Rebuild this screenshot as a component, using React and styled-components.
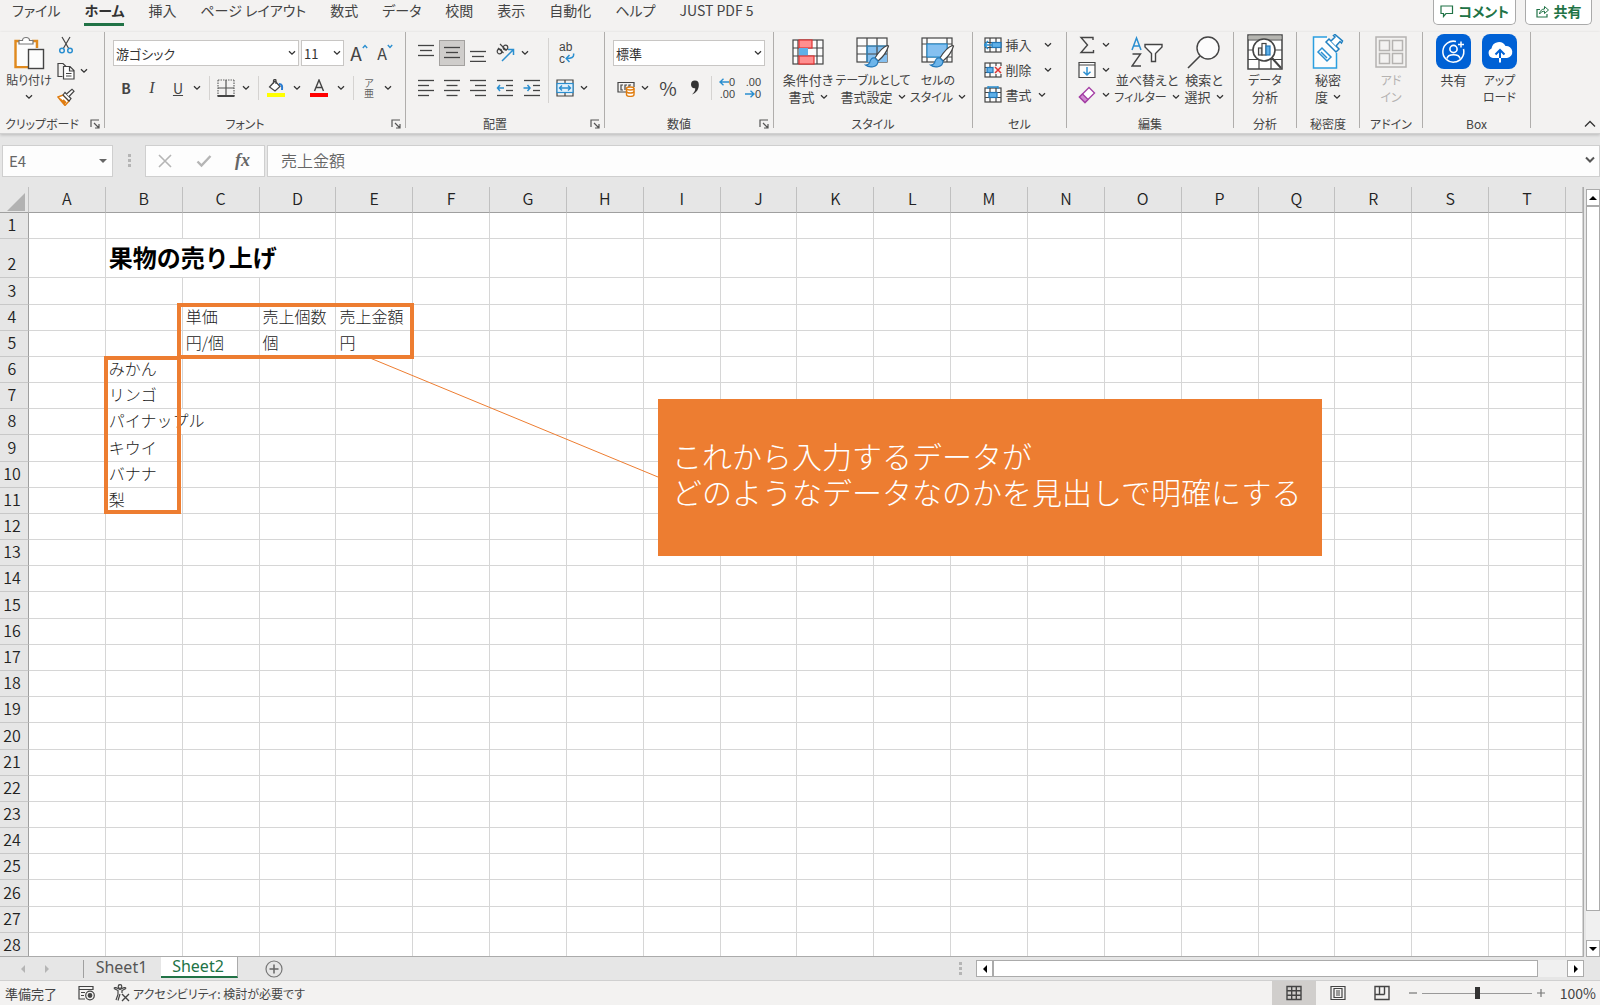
import React, { useState } from 'react'
import styled, { createGlobalStyle, css } from 'styled-components'

const TABS = ['ファイル', 'ホーム', '挿入', 'ページ レイアウト', '数式', 'データ', '校閲', '表示', '自動化', 'ヘルプ', 'JUST PDF 5']
const COLUMNS = 'ABCDEFGHIJKLMNOPQRST'.split('')
const ROW_COUNT = 28

const CELLS = {
  B2: { text: '果物の売り上げ', span: 3, title: true },
  C4: { text: '単価' },
  D4: { text: '売上個数' },
  E4: { text: '売上金額' },
  C5: { text: '円/個' },
  D5: { text: '個' },
  E5: { text: '円' },
  B6: { text: 'みかん' },
  B7: { text: 'リンゴ' },
  B8: { text: 'パイナップル', span: 2 },
  B9: { text: 'キウイ' },
  B10: { text: 'バナナ' },
  B11: { text: '梨' },
}

const hasKanji = (text) => /[一-龠]/.test(text)

/* ---------- icons ---------- */

const Svg = ({ w = 18, h = 18, children }) => (
  <svg width={w} height={h} viewBox={`0 0 ${w} ${h}`} fill="none" stroke="#444" strokeWidth="1.2" aria-hidden="true">
    {children}
  </svg>
)

const Chevron = () => (
  <Svg w={8} h={6}><path d="M1 1.2L4 4.2L7 1.2" stroke="#333" strokeWidth="1.3" /></Svg>
)

const PasteIcon = () => (
  <Svg w={32} h={34}>
    <path d="M7 5H2.5V31H15M19 5H24V12" stroke="#e08a1e" strokeWidth="2.4" />
    <path d="M4 7H22V13H15V30H4Z" fill="#fcfcfc" stroke="none" />
    <path d="M6 8V4.5H9.5C9.5 0.5 16.5 0.5 16.5 4.5H20V8Z" fill="#fff" stroke="#777" />
    <rect x="15.5" y="13.5" width="15" height="19" fill="#fcfcfc" stroke="#444" strokeWidth="1.4" />
  </Svg>
)

const CutIcon = () => (
  <Svg>
    <path d="M5 1L12 13M13 1L6 13" />
    <circle cx="5" cy="14.5" r="2.3" stroke="#2b8fd0" strokeWidth="1.5" />
    <circle cx="13" cy="14.5" r="2.3" stroke="#2b8fd0" strokeWidth="1.5" />
  </Svg>
)

const CopyIcon = () => (
  <Svg>
    <path d="M5.5 14.5H1V1.5H6L9 4.5" />
    <path d="M6.5 4.5H13L17 8.5V17H6.5ZM12.5 4.5V9H17" fill="#fff" />
    <path d="M9 11.5H14.5M9 14H14.5" />
  </Svg>
)

const PainterIcon = () => (
  <Svg>
    <path d="M1 9L6 7L12 13L8 17.5Z" fill="#fff" stroke="#e07d10" strokeWidth="1.4" />
    <path d="M3 11L8 16M6 12L9 15" stroke="#e07d10" strokeWidth="1.8" />
    <path d="M6 7L8 4.5L14 10.5L12 13Z" fill="#fff" />
    <path d="M9.5 6L15 1.2L17 3.2L12 8.5" fill="#fff" />
  </Svg>
)

const BordersIcon = () => (
  <Svg>
    <path d="M1 1H17M1 1V17M17 1V17" strokeDasharray="1.5 1" stroke="#666" />
    <path d="M9 1V17M1 9H17" stroke="#555" />
    <path d="M0.5 17H17.5" strokeWidth="2" />
  </Svg>
)

const FillIcon = () => (
  <Svg>
    <path d="M2.5 8L8 2L13 7.5L8 12Z" fill="#fff" />
    <path d="M6.5 4.5V1.5C7 0 9 0 9 1.5V5" />
    <path d="M12 5C15 5 15.5 7 15 11" stroke="#2b7cd0" strokeWidth="2" />
    <rect y="14" width="18" height="4" fill="#ff0" stroke="none" />
  </Svg>
)

const FontColorIcon = () => (
  <Svg>
    <path d="M4.5 12L9 1L13.5 12M6 8.5H12" strokeWidth="1.4" />
    <rect y="14" width="18" height="4" fill="#f00" stroke="none" />
  </Svg>
)

const Lines = ({ rows, children }) => (
  <Svg>
    {rows.map(([x, y, len]) => <path key={y} d={`M${x} ${y}H${x + len}`} strokeWidth="1.3" />)}
    {children}
  </Svg>
)
const TopAlignIcon = () => <Lines rows={[[1, 1.5, 16], [3, 6.5, 12], [1, 11.5, 16]]} />
const MiddleAlignIcon = () => <Lines rows={[[1, 3.5, 16], [3, 8.5, 12], [1, 13.5, 16]]} />
const BottomAlignIcon = () => <Lines rows={[[1, 7.5, 16], [3, 12.5, 12], [1, 17.4, 16]]} />
const LeftIcon = () => <Lines rows={[[1, 1.5, 16], [1, 6.5, 11], [1, 11.5, 16], [1, 16.5, 11]]} />
const CenterIcon = () => <Lines rows={[[1, 1.5, 16], [3.5, 6.5, 11], [1, 11.5, 16], [3.5, 16.5, 11]]} />
const RightIcon = () => <Lines rows={[[1, 1.5, 16], [6, 6.5, 11], [1, 11.5, 16], [6, 16.5, 11]]} />
const OutdentIcon = () => (
  <Lines rows={[[1, 1.5, 16], [10, 6.5, 7], [10, 11.5, 7], [1, 16.5, 16]]}>
    <path d="M8 9H1.5M4 6L1.5 9L4 12" stroke="#2b8fd0" strokeWidth="1.5" />
  </Lines>
)
const IndentIcon = () => (
  <Lines rows={[[1, 1.5, 16], [10, 6.5, 7], [10, 11.5, 7], [1, 16.5, 16]]}>
    <path d="M0.5 9H7M4.5 6L7 9L4.5 12" stroke="#2b8fd0" strokeWidth="1.5" />
  </Lines>
)

const OrientationIcon = () => (
  <Svg w={20} h={20}>
    <circle cx="4.5" cy="8.5" r="2.3" />
    <path d="M3 5L8.5 10M5 1L11.5 7.5" />
    <circle cx="10.5" cy="4.5" r="2.3" />
    <path d="M7 18L18 7M13 6.5H18.5V12" stroke="#2b8fd0" strokeWidth="1.5" />
  </Svg>
)

const MergeIcon = () => (
  <Svg>
    <path d="M1 1H17V17H1ZM9 1V4.5M9 13.5V17" />
    <rect x="1" y="4.5" width="16" height="9" fill="#e3f1fb" stroke="#2b8fd0" />
    <path d="M3.5 9H14.5M6 6.5L3.5 9L6 11.5M12 6.5L14.5 9L12 11.5" stroke="#2b8fd0" strokeWidth="1.4" />
  </Svg>
)

const CurrencyIcon = () => (
  <Svg>
    <path d="M9 13H1V3.5H17V8M6 6H4V11H6M10 6H8V11M14 6H12V8" />
    <path d="M9.5 9.5V15.5C9.5 18 17 18 17 15.5V9.5" fill="#fff" stroke="#e07d10" strokeWidth="1.4" />
    <ellipse cx="13.2" cy="9.5" rx="3.8" ry="1.5" fill="#fff" stroke="#e07d10" strokeWidth="1.4" />
    <path d="M9.5 12.5C10 14.5 16.5 14.5 17 12.5" stroke="#e07d10" strokeWidth="1.4" />
  </Svg>
)

const CommaIcon = () => (
  <Svg w={10} h={16}>
    <path d="M1 4.5A3.8 3.8 0 0 1 8.8 4.5C9 9 6.5 13 2 14.5C4 12.5 5.5 10.5 5.2 8.2C3 8.8 1 7 1 4.5Z" fill="#333" stroke="none" />
  </Svg>
)

const WrapArrow = () => (
  <Svg w={10} h={10}><path d="M8.5 0.5C9.5 4.5 6 5.5 1.5 5.5M4.5 2L1.2 5.5L4.5 9" stroke="#2b8fd0" strokeWidth="1.5" /></Svg>
)

const DigitArrow = ({ flip }) => (
  <Svg w={10} h={8}><path d={flip ? 'M0 4H9M5.5 0.8L9 4L5.5 7.2' : 'M10 4H1M4.5 0.8L1 4L4.5 7.2'} stroke="#2b8fd0" strokeWidth="1.4" /></Svg>
)

const SizeCaret = ({ down }) => (
  <Svg w={6} h={5}><path d={down ? 'M0.8 1L3 3.5L5.2 1' : 'M0.8 4L3 1.5L5.2 4'} stroke="#2b8fd0" strokeWidth="1.4" /></Svg>
)

const ConditionalIcon = () => (
  <Svg w={32} h={26}>
    <rect x="1" y="1" width="30" height="24" fill="#fcfcfc" />
    <path d="M1 9H31M1 17H31M6 1V25M25 1V25" />
    <rect x="7" y="1" width="13" height="8" fill="#ff8f8f" stroke="#e03232" />
    <rect x="7" y="9" width="9" height="8" fill="#5fb0e8" stroke="none" />
    <rect x="7" y="17" width="15" height="8" fill="#ff8f8f" stroke="#e03232" />
  </Svg>
)

const Brush = () => (
  <>
    <path d="M31.5 9.5C27 11 22 17 19 22L22 25C27 21 31 15 32.5 10Z" fill="#fff" />
    <path d="M19 22C15 21 14 25 13.5 27C12.5 29 11 29 9.5 29C13 32 22 32 22 25Z" fill="#6db5ea" stroke="#2277b8" />
  </>
)

const TableFormatIcon = () => (
  <Svg w={34} h={32}>
    <rect x="1" y="2" width="30" height="24" fill="#fcfcfc" />
    <rect x="11" y="10" width="20" height="16" fill="#85c0f0" stroke="none" />
    <path d="M1 10H31M1 18H31M11 2V26M21 2V26" />
    <path d="M11 26V10H31" stroke="#2b8fd0" />
    <Brush />
  </Svg>
)

const CellStyleIcon = () => (
  <Svg w={34} h={32}>
    <rect x="1" y="2" width="30" height="24" fill="#fcfcfc" />
    <path d="M1 8H31M6 2V26M1 21H31M26 2V26" />
    <rect x="6" y="8" width="20" height="13" fill="#85c0f0" stroke="#2b8fd0" />
    <Brush />
  </Svg>
)

const CellGrid = () => (
  <>
    <rect x="1" y="2" width="16" height="14" fill="#fcfcfc" />
    <path d="M1 6.5H17M1 11.5H17M6 2V16M12 2V16" />
  </>
)
const InsertCellIcon = () => (
  <Svg>
    <CellGrid />
    <rect x="8" y="6.5" width="9" height="5" fill="#5fb0e8" stroke="#2277b8" />
    <path d="M8 9H0M4 5L0.5 9L4 13" stroke="#2b8fd0" strokeWidth="1.6" />
  </Svg>
)
const DeleteCellIcon = () => (
  <Svg>
    <CellGrid />
    <rect x="9" y="5" width="9" height="8" fill="#f3f2f1" stroke="none" />
    <rect x="3" y="6.5" width="6" height="5" fill="#5fb0e8" stroke="#2277b8" />
    <path d="M11 6L17 12M17 6L11 12" stroke="#e03232" strokeWidth="1.5" />
  </Svg>
)
const FormatCellIcon = () => (
  <Svg>
    <CellGrid />
    <rect x="5" y="6.5" width="8" height="5" fill="#5fb0e8" stroke="#2277b8" />
    <path d="M4 1H14M4 0V3M14 0V3" stroke="#2b8fd0" strokeWidth="1.3" />
  </Svg>
)

const SumIcon = () => <Svg><path d="M15 4V1.5H3L9.5 9L3 16.5H15.5V14" strokeWidth="1.4" /></Svg>
const FillDownIcon = () => (
  <Svg>
    <path d="M1 1.5H17V16.5H1ZM1 4H17" fill="#fcfcfc" />
    <path d="M9 6V14M5.5 10.8L9 14L12.5 10.8" stroke="#2b8fd0" strokeWidth="1.5" />
  </Svg>
)
const EraserIcon = () => (
  <Svg>
    <path d="M1.5 11L11 1.5L16.5 7L7 16.5Z" fill="#fff" stroke="#a540a5" strokeWidth="1.4" />
    <path d="M1.5 11L4.5 8L10 13.5L7 16.5Z" fill="#cf8ad0" stroke="#a540a5" strokeWidth="1.4" />
  </Svg>
)

const SortIcon = () => (
  <Svg w={32} h={32}>
    <path d="M1 14L5.5 2L10 14M2.5 10H8.5" stroke="#2b8fd0" strokeWidth="1.5" />
    <path d="M1.5 18H9.5L1 30H10" strokeWidth="1.4" />
    <path d="M14 8.5H31V11L24.5 17.5V25.5H20.5V17.5L14 11Z" fill="#fcfcfc" strokeWidth="1.4" />
  </Svg>
)

const SearchIcon = () => (
  <Svg w={34} h={34}>
    <circle cx="21" cy="13" r="11" fill="#fcfcfc" strokeWidth="1.4" />
    <path d="M13 21L1 33" strokeWidth="1.6" />
  </Svg>
)

const AnalyzeIcon = () => (
  <Svg w={36} h={36}>
    <rect x="1" y="1" width="34" height="34" fill="#fff" strokeWidth="1.5" />
    <rect x="1.5" y="1.5" width="33" height="4" fill="#b5b5b0" stroke="none" />
    <path d="M1 6H35M1 16H35M1 25.5H35M12 25V35M24 25V35" />
    <circle cx="17" cy="16" r="11" fill="#fff" strokeWidth="1.6" />
    <path d="M25 24L34 34" strokeWidth="2" />
    <rect x="11.5" y="14" width="3.5" height="7" fill="#ddd" />
    <rect x="15" y="9.5" width="4" height="11.5" fill="#fff" />
    <rect x="19" y="12" width="4" height="9" fill="#5fb0e8" stroke="#2277b8" />
  </Svg>
)

const SensitivityIcon = () => (
  <Svg w={32} h={36}>
    <path d="M15 3H1.5V34H24.5V19" fill="#fcfcfc" stroke="#2b9fe0" strokeWidth="1.5" />
    <path d="M6 18L10 14L19 23L15 27ZM9 18L15 24" fill="#fff" stroke="#2b8fd0" strokeWidth="1.5" />
    <path d="M14 8L17 5L27 15L24 18Z" fill="#fff" stroke="#1f7fc0" strokeWidth="1.5" />
    <path d="M19 7L23 3L21.5 1.5L23 0.5L30.5 7L29.5 9L28 7.5L24 12" fill="#fff" stroke="#1f7fc0" strokeWidth="1.5" />
  </Svg>
)

const AddinIcon = () => (
  <Svg w={32} h={32}>
    <g stroke="#b5b3b1" strokeWidth="1.5">
      <rect x="1" y="1" width="30" height="30" />
      <rect x="4.5" y="4.5" width="10" height="10" />
      <rect x="17.5" y="4.5" width="10" height="10" />
      <rect x="4.5" y="17.5" width="10" height="10" />
      <rect x="17.5" y="17.5" width="10" height="10" />
    </g>
  </Svg>
)

const BoxShareIcon = () => (
  <Svg w={36} h={36}>
    <rect width="35" height="35" rx="8" fill="#0061d5" stroke="none" />
    <path d="M20 7.5A10.5 10.5 0 1 0 27.5 15" stroke="#fff" strokeWidth="1.5" />
    <circle cx="17.5" cy="15" r="3.6" stroke="#fff" strokeWidth="1.6" />
    <path d="M11 24.5C12 19.5 23 19.5 24 24.5" stroke="#fff" strokeWidth="1.6" />
    <path d="M25 7.5V13.5M22 10.5H28" stroke="#fff" strokeWidth="1.5" />
  </Svg>
)

const BoxUploadIcon = () => (
  <Svg w={36} h={36}>
    <rect width="35" height="35" rx="8" fill="#0061d5" stroke="none" />
    <path d="M11 24A5 5 0 0 1 9.5 14.5A7.5 7.5 0 0 1 23.5 12A6 6 0 0 1 25 24Z" fill="#fff" stroke="none" />
    <path d="M18 24V17M13.5 20.5L18 16L22.5 20.5" stroke="#0061d5" strokeWidth="2" />
    <path d="M18 24V28.5" stroke="#fff" strokeWidth="2" />
  </Svg>
)

const LauncherIcon = () => (
  <Svg w={10} h={10}><path d="M1 8V1H9M4 4L9 9M9 5V9H5" stroke="#555" /></Svg>
)

const CommentIcon = () => (
  <Svg w={14} h={13}><path d="M1 1H12.5V8.5H6L3.5 11.5V8.5H1Z" stroke="#217346" /></Svg>
)
const ShareIcon = () => (
  <Svg w={14} h={13}>
    <path d="M4 4.5H1V12H11V9" stroke="#217346" />
    <path d="M3.5 9C4 5.5 6 4 8.5 4V1.5L12.5 5L8.5 8.5V6.2C6.5 6.2 5 7 3.5 9Z" stroke="#217346" strokeWidth="1" />
  </Svg>
)

const Triangle = ({ dir = 'down', color = '#000' }) => {
  const d = { down: 'M1 3H9L5 7Z', up: 'M1 7H9L5 3Z', left: 'M7 1V9L3 5Z', right: 'M3 1V9L7 5Z' }[dir]
  return <Svg w={10} h={10}><path d={d} fill={color} stroke="none" /></Svg>
}

const MacroIcon = () => (
  <Svg w={18} h={16}>
    <path d="M7 14H1V1.5H15V5M1 4.5H15M3 7.5H7M3 10.5H6" />
    <circle cx="12" cy="10.5" r="4.3" fill="#f3f2f1" />
    <circle cx="12" cy="10.5" r="1.8" fill="#444" />
  </Svg>
)
const AccessIcon = () => (
  <Svg w={18} h={18}>
    <circle cx="7" cy="2.5" r="1.8" />
    <path d="M1 4.5L5 6.5V10.5L3 16M13 4.5L9 6.5V9M1 4.5C1.5 3 3 3.5 7 5.5C11 3.5 12.5 3 13 4.5M7 10L5 16.5" />
    <path d="M9 10L16 17M16 10L9 17" strokeWidth="1.4" />
  </Svg>
)

const NormalViewIcon = () => <Svg w={16} h={16}><path d="M1 1.5H15V14.5H1ZM1 5.8H15M1 10.2H15M5.7 1.5V14.5M10.3 1.5V14.5" strokeWidth="1.4" /></Svg>
const PageViewIcon = () => <Svg w={16} h={16}><path d="M1 1.5H15V14.5H1ZM4 3.5H12V12.5H4ZM6 6H10M6 8H10M6 10H10" /></Svg>
const BreakViewIcon = () => <Svg w={16} h={16}><path d="M1 1.5H15V14.5H1ZM5.5 1.5V9.5M10.5 1.5V9.5M1 9.5H10.5" strokeWidth="1.4" /></Svg>

/* ---------- ribbon pieces ---------- */

const Tool = ({ w, label, active, children }) => (
  <ToolButton type="button" $w={w} $active={active} aria-label={label}>{children}</ToolButton>
)

const Drop = () => <DropButton type="button" aria-label="その他"><Chevron /></DropButton>

const Combo = ({ label, value, w }) => (
  <ComboBox $w={w}>
    <select aria-label={label} defaultValue={value}>
      <option>{value}</option>
    </select>
    <Chevron />
  </ComboBox>
)

const Big = ({ icon, lines, drop, w, disabled }) => (
  <BigButton type="button" $w={w} disabled={disabled}>
    <BigIcon>{icon}</BigIcon>
    {lines.map((line, i) => (
      <BigLine key={line} $small={!hasKanji(line)}>
        {line}
        {drop && i === lines.length - 1 && <Chevron />}
      </BigLine>
    ))}
  </BigButton>
)

const RibbonGroup = ({ title, w, pad, launcher, children }) => (
  <Group $w={w} aria-label={title}>
    <GroupBody $pad={pad}>{children}</GroupBody>
    <GroupFooter $launcher={launcher}>
      <span>{title}</span>
      {launcher && <button type="button" aria-label={`${title}の設定`}><LauncherIcon /></button>}
    </GroupFooter>
  </Group>
)

const Ribbon = () => (
  <RibbonBar>
    <RibbonGroup title="クリップボード" w={105} pad={4} launcher>
      <PasteButton type="button">
        <PasteIcon />
        <span>貼り付け</span>
        <Chevron />
      </PasteButton>
      <ToolColumn $row={26}>
        <ToolRow><Tool w={24} label="切り取り"><CutIcon /></Tool></ToolRow>
        <ToolRow><Tool w={24} label="コピー"><CopyIcon /></Tool><Drop /></ToolRow>
        <ToolRow><Tool w={24} label="書式のコピー"><PainterIcon /></Tool></ToolRow>
      </ToolColumn>
    </RibbonGroup>

    <RibbonGroup title="フォント" w={301} pad={8} launcher>
      <Rows>
        <ToolRow>
          <Combo label="フォント" value="游ゴシック" w={186} />
          <Combo label="フォント サイズ" value="11" w={43} />
          <Tool w={26} label="フォント サイズの拡大"><SizeA $size={19}>A</SizeA><SizeMark><SizeCaret /></SizeMark></Tool>
          <Tool w={26} label="フォント サイズの縮小"><SizeA $size={16}>A</SizeA><SizeMark><SizeCaret down /></SizeMark></Tool>
        </ToolRow>
        <ToolRow>
          <Tool w={26} label="太字"><b>B</b></Tool>
          <Tool w={26} label="斜体"><Italic>I</Italic></Tool>
          <Tool w={26} label="下線"><u>U</u></Tool>
          <Drop />
          <Divider />
          <Tool w={28} label="罫線"><BordersIcon /></Tool>
          <Drop />
          <Divider />
          <Tool w={30} label="塗りつぶしの色"><FillIcon /></Tool>
          <Drop />
          <Tool w={32} label="フォントの色"><FontColorIcon /></Tool>
          <Drop />
          <Divider />
          <Tool w={26} label="ふりがな"><Stack><span>ア</span><span>亜</span></Stack></Tool>
          <Drop />
        </ToolRow>
      </Rows>
    </RibbonGroup>

    <RibbonGroup title="配置" w={199} pad={7} launcher>
      <Rows>
        <ToolRow>
          <Tool w={26} label="上揃え"><TopAlignIcon /></Tool>
          <Tool w={26} label="上下中央揃え" active><MiddleAlignIcon /></Tool>
          <Tool w={26} label="下揃え"><BottomAlignIcon /></Tool>
          <Tool w={28} label="方向"><OrientationIcon /></Tool>
          <Drop />
        </ToolRow>
        <ToolRow>
          <Tool w={26} label="左揃え"><LeftIcon /></Tool>
          <Tool w={26} label="中央揃え"><CenterIcon /></Tool>
          <Tool w={26} label="右揃え"><RightIcon /></Tool>
          <Tool w={28} label="インデントを減らす"><OutdentIcon /></Tool>
          <Tool w={26} label="インデントを増やす"><IndentIcon /></Tool>
        </ToolRow>
      </Rows>
      <TallDivider />
      <Rows>
        <ToolRow>
          <Tool w={30} label="折り返して全体を表示する"><Wrap><span>ab</span><span>c<WrapArrow /></span></Wrap></Tool>
        </ToolRow>
        <ToolRow>
          <Tool w={26} label="セルを結合して中央揃え"><MergeIcon /></Tool>
          <Drop />
        </ToolRow>
      </Rows>
    </RibbonGroup>

    <RibbonGroup title="数値" w={169} pad={8} launcher>
      <Rows>
        <ToolRow><Combo label="数値の書式" value="標準" w={152} /></ToolRow>
        <ToolRow>
          <Tool w={26} label="通貨表示形式"><CurrencyIcon /></Tool>
          <Drop />
          <Tool w={34} label="パーセント スタイル"><Percent>%</Percent></Tool>
          <Tool w={20} label="桁区切りスタイル"><CommaIcon /></Tool>
          <Divider />
          <Tool w={26} label="小数点以下の表示桁数を増やす"><Digits><span><DigitArrow />0</span><span>.00</span></Digits></Tool>
          <Tool w={26} label="小数点以下の表示桁数を減らす"><Digits><span>.00</span><span><DigitArrow flip />0</span></Digits></Tool>
        </ToolRow>
      </Rows>
    </RibbonGroup>

    <RibbonGroup title="スタイル" w={199}>
      <Big w={60} icon={<ConditionalIcon />} lines={['条件付き', '書式']} drop />
      <Big w={70} icon={<TableFormatIcon />} lines={['テーブルとして', '書式設定']} drop />
      <Big w={60} icon={<CellStyleIcon />} lines={['セルの', 'スタイル']} drop />
    </RibbonGroup>

    <RibbonGroup title="セル" w={94}>
      <ToolColumn $row={25}>
        <LabelTool type="button"><InsertCellIcon /><span>挿入</span><Chevron /></LabelTool>
        <LabelTool type="button"><DeleteCellIcon /><span>削除</span><Chevron /></LabelTool>
        <LabelTool type="button" $tight><FormatCellIcon /><span>書式</span><Chevron /></LabelTool>
      </ToolColumn>
    </RibbonGroup>

    <RibbonGroup title="編集" w={167} pad={7}>
      <ToolColumn $row={25}>
        <ToolRow><Tool w={26} label="合計"><SumIcon /></Tool><Drop /></ToolRow>
        <ToolRow><Tool w={26} label="フィル"><FillDownIcon /></Tool><Drop /></ToolRow>
        <ToolRow><Tool w={26} label="クリア"><EraserIcon /></Tool><Drop /></ToolRow>
      </ToolColumn>
      <Big w={70} icon={<SortIcon />} lines={['並べ替えと', 'フィルター']} drop />
      <Big w={44} icon={<SearchIcon />} lines={['検索と', '選択']} drop />
    </RibbonGroup>

    <RibbonGroup title="分析" w={63}>
      <Big w={62} icon={<AnalyzeIcon />} lines={['データ', '分析']} />
    </RibbonGroup>
    <RibbonGroup title="秘密度" w={63}>
      <Big w={62} icon={<SensitivityIcon />} lines={['秘密', '度']} drop />
    </RibbonGroup>
    <RibbonGroup title="アドイン" w={63}>
      <Big w={62} icon={<AddinIcon />} lines={['アド', 'イン']} disabled />
    </RibbonGroup>
    <RibbonGroup title="Box" w={108}>
      <Big w={46} icon={<BoxShareIcon />} lines={['共有']} />
      <Big w={46} icon={<BoxUploadIcon />} lines={['アップ', 'ロード']} />
    </RibbonGroup>
    <Collapse type="button" aria-label="リボンを折りたたむ">
      <Svg w={12} h={8}><path d="M1 6.5L6 1.5L11 6.5" stroke="#333" strokeWidth="1.3" /></Svg>
    </Collapse>
  </RibbonBar>
)

const SheetRow = ({ n }) => {
  const cells = []
  for (let i = 0; i < COLUMNS.length; i++) {
    const cell = CELLS[COLUMNS[i] + n]
    cells.push(
      <Cell key={COLUMNS[i]} colSpan={cell?.span} $title={cell?.title}>
        {cell?.text}
      </Cell>
    )
    if (cell?.span) i += cell.span - 1
  }
  return (
    <GridRow $tall={n === 2}>
      <RowHead scope="row">{n}</RowHead>
      {cells}
      <Cell />
    </GridRow>
  )
}

export default function App() {
  const [tab, setTab] = useState('ホーム')
  const [sheet, setSheet] = useState('Sheet2')
  const [zoom, setZoom] = useState(50)

  return (
    <Page>
      <GlobalStyle />
      <TopBar>
        <TabList>
          {TABS.map((name) => (
            <TabButton key={name} type="button" $active={name === tab} onClick={() => setTab(name)}>{name}</TabButton>
          ))}
        </TabList>
        <ActionButton type="button"><CommentIcon />コメント</ActionButton>
        <ActionButton type="button"><ShareIcon />共有</ActionButton>
      </TopBar>
      <Ribbon />

      <FormulaBar>
        <NameBox>
          <input aria-label="名前ボックス" defaultValue="E4" />
          <Triangle color="#666" />
        </NameBox>
        <Dots><i /><i /><i /></Dots>
        <FormulaTools>
          <button type="button" aria-label="キャンセル"><Svg w={14} h={14}><path d="M1 1L13 13M13 1L1 13" stroke="#b5b5b5" strokeWidth="1.6" /></Svg></button>
          <button type="button" aria-label="入力"><Svg w={16} h={14}><path d="M1.5 7.5L5.5 11.5L14.5 2" stroke="#b5b5b5" strokeWidth="2.4" /></Svg></button>
          <button type="button" aria-label="関数の挿入"><Fx>fx</Fx></button>
        </FormulaTools>
        <FormulaInput>
          <input aria-label="数式バー" defaultValue="売上金額" />
          <Svg w={10} h={8}><path d="M1 1.5L5 5.5L9 1.5" stroke="#555" strokeWidth="2" /></Svg>
        </FormulaInput>
      </FormulaBar>

      <Workspace>
        <SheetArea>
          <Grid>
            <colgroup>
              <col className="head" />
              {COLUMNS.map((c) => <col key={c} />)}
              <col className="rest" />
            </colgroup>
            <thead>
              <tr>
                <Corner><Svg w={18} h={18}><path d="M18 0V18H0Z" fill="#b2b2b2" stroke="none" /></Svg></Corner>
                {COLUMNS.map((c) => <ColHead key={c} scope="col">{c}</ColHead>)}
                <ColHead />
              </tr>
            </thead>
            <tbody>
              {Array.from({ length: ROW_COUNT }, (_, i) => <SheetRow key={i} n={i + 1} />)}
            </tbody>
          </Grid>
          <Connector width="288" height="120" viewBox="0 0 288 120" aria-hidden="true">
            <path d="M0 0L288 119" stroke="#ed7d31" fill="none" />
          </Connector>
          <Frame $x={177} $y={116} $w={237} $h={56} />
          <Frame $x={104} $y={169} $w={77} $h={158} />
          <Callout>
            これから入力するデータが
            <br />
            どのようなデータなのかを見出しで明確にする
          </Callout>
        </SheetArea>
        <VScroll>
          <ScrollButton type="button" aria-label="上へ"><Triangle dir="up" /></ScrollButton>
          <VTrack><VThumb /></VTrack>
          <ScrollButton type="button" aria-label="下へ"><Triangle /></ScrollButton>
        </VScroll>
      </Workspace>

      <SheetBar>
        <SheetNav>
          <button type="button" aria-label="前のシート"><Triangle dir="left" color="#b5b5b5" /></button>
          <button type="button" aria-label="次のシート"><Triangle dir="right" color="#b5b5b5" /></button>
        </SheetNav>
        {['Sheet1', 'Sheet2'].map((name) => (
          <SheetTab key={name} type="button" $active={name === sheet} onClick={() => setSheet(name)}>{name}</SheetTab>
        ))}
        <AddSheet type="button" aria-label="新しいシート">
          <Svg><circle cx="9" cy="9" r="8" stroke="#777" /><path d="M9 4.5V13.5M4.5 9H13.5" stroke="#666" strokeWidth="1.5" /></Svg>
        </AddSheet>
        <Dots><i /><i /><i /></Dots>
        <HScroll>
          <ScrollButton type="button" $side aria-label="左へ"><Triangle dir="left" /></ScrollButton>
          <HTrack><HThumb /></HTrack>
          <ScrollButton type="button" $side aria-label="右へ"><Triangle dir="right" /></ScrollButton>
        </HScroll>
      </SheetBar>

      <StatusBar>
        <span>準備完了</span>
        <MacroIcon />
        <Access><AccessIcon />アクセシビリティ: 検討が必要です</Access>
        <Views>
          <ViewButton type="button" $active aria-label="標準"><NormalViewIcon /></ViewButton>
          <ViewButton type="button" aria-label="ページ レイアウト"><PageViewIcon /></ViewButton>
          <ViewButton type="button" aria-label="改ページ プレビュー"><BreakViewIcon /></ViewButton>
        </Views>
        <Step type="button" aria-label="縮小"><Svg w={10} h={10}><path d="M1 5H9" stroke="#777" /></Svg></Step>
        <Slider type="range" aria-label="ズーム" min="0" max="100" value={zoom} onChange={(e) => setZoom(Number(e.target.value))} />
        <Step type="button" aria-label="拡大"><Svg w={10} h={10}><path d="M1 5H9M5 1V9" stroke="#777" /></Svg></Step>
        <ZoomText>100%</ZoomText>
      </StatusBar>
    </Page>
  )
}

/* ---------- styles ---------- */

const GlobalStyle = createGlobalStyle`
  * {
    box-sizing: border-box;
  }
  body {
    margin: 0;
    font-family: "Noto Sans CJK JP", "Noto Sans", sans-serif;
    font-size: 13px;
    color: #444;
    background: #e6e6e6;
  }
  button, input, select {
    font: inherit;
    color: inherit;
    border: 0;
    padding: 0;
    background: none;
  }
  svg {
    display: block;
    flex: none;
  }
`

const Page = styled.div`
  display: flex;
  flex-direction: column;
  height: 100vh;
  min-width: 1540px;
  overflow: hidden;
  font-feature-settings: "palt";
`

const TopBar = styled.header`
  display: flex;
  align-items: flex-start;
  gap: 9px;
  height: 32px;
  padding-right: 8px;
  background: #f3f2f1;
`

const TabList = styled.nav`
  display: flex;
  flex: 1;
  gap: 24px;
  padding-left: 12px;
`

const TabButton = styled.button`
  height: 26px;
  padding-bottom: 3px;
  font-size: 14px;
  line-height: 20px;
  white-space: nowrap;
  border-bottom: 3px solid transparent;
  ${({ $active }) => $active && css`
    font-weight: bold;
    color: #333;
    border-bottom-color: #217346;
  `}
`

const ActionButton = styled.button`
  display: flex;
  align-items: center;
  justify-content: center;
  gap: 4px;
  height: 25px;
  min-width: 67px;
  padding: 0 6px 2px;
  font-size: 14px;
  font-weight: bold;
  color: #217346;
  background: #fff;
  border: 1px solid #aaa;
  border-top: 0;
  border-radius: 0 0 5px 5px;
`

const RibbonBar = styled.div`
  display: flex;
  height: 102px;
  padding-bottom: 5px;
  background: #f3f2f1;
  border-bottom: 1px solid #d0d0d0;
  box-shadow: 0 1px 3px rgba(0, 0, 0, 0.2);
`

const Group = styled.section`
  display: flex;
  flex-direction: column;
  flex: 0 0 ${({ $w }) => $w}px;
  border-right: 1px solid #b0aeac;
`

const GroupBody = styled.div`
  display: flex;
  flex: 1;
  align-items: flex-start;
  justify-content: ${({ $pad }) => ($pad ? 'flex-start' : 'center')};
  padding-left: ${({ $pad = 0 }) => $pad}px;
`

const GroupFooter = styled.div`
  position: relative;
  height: 12px;
  padding-right: ${({ $launcher }) => ($launcher ? 20 : 0)}px;
  font-size: 12px;
  line-height: 16px;
  text-align: center;
  span {
    white-space: nowrap;
  }
  button {
    position: absolute;
    right: 4px;
    bottom: -1px;
  }
`

const ToolRow = styled.div`
  display: flex;
  align-items: center;
  height: 26px;
`

const ToolColumn = styled.div`
  display: flex;
  flex-direction: column;
  > * {
    height: ${({ $row }) => $row}px;
  }
`

const Rows = styled.div`
  display: flex;
  flex-direction: column;
  gap: 9px;
  padding-top: 8px;
`

const ToolButton = styled.button`
  display: flex;
  align-items: center;
  justify-content: center;
  width: ${({ $w }) => $w}px;
  height: 26px;
  font-size: 14px;
  line-height: 20px;
  ${({ $active }) => $active && css`
    background: #cfcdcb;
    border: 1px solid #a3a19f;
  `}
`

const DropButton = styled.button`
  display: flex;
  align-items: center;
  justify-content: center;
  width: 12px;
  height: 26px;
`

const Divider = styled.span`
  width: 1px;
  height: 24px;
  margin: 0 2px 0 6px;
  background: #d5d3d1;
`

const TallDivider = styled.span`
  width: 1px;
  height: 65px;
  margin: 6px 3px 0 3px;
  background: #d5d3d1;
`

const ComboBox = styled.span`
  display: flex;
  align-items: center;
  position: relative;
  width: ${({ $w }) => $w}px;
  height: 26px;
  margin-right: 2px;
  background: #fff;
  border: 1px solid #c8c6c4;
  select {
    flex: 1;
    width: 100%;
    height: 24px;
    padding-left: 2px;
    appearance: none;
    font-size: 13px;
    color: #333;
  }
  svg {
    position: absolute;
    right: 2px;
    pointer-events: none;
  }
`

const PasteButton = styled.button`
  display: flex;
  flex-direction: column;
  align-items: center;
  width: 50px;
  padding-top: 4px;
  font-size: 12px;
  line-height: 20px;
  svg + span {
    margin-bottom: 4px;
  }
`

const SizeA = styled.span`
  font-size: ${({ $size }) => $size}px;
  line-height: 20px;
`

const SizeMark = styled.span`
  align-self: flex-start;
  padding-top: 4px;
`

const Italic = styled.i`
  font-family: "Liberation Serif", serif;
  font-size: 16px;
`

const Stack = styled.span`
  display: flex;
  flex-direction: column;
  font-size: 10px;
  line-height: 10px;
  color: #666;
`

const Wrap = styled.span`
  display: flex;
  flex-direction: column;
  font-family: "Liberation Sans", sans-serif;
  font-size: 12px;
  line-height: 12px;
  span {
    display: flex;
    line-height: 12px;
  }
`

const Percent = styled.span`
  font-size: 19px;
`

const Digits = styled.span`
  display: flex;
  flex-direction: column;
  align-items: flex-end;
  font-family: "Liberation Sans", sans-serif;
  font-size: 11px;
  line-height: 12px;
  span {
    display: flex;
    align-items: center;
  }
`

const BigButton = styled.button`
  display: flex;
  flex-direction: column;
  align-items: center;
  width: ${({ $w }) => $w}px;
  color: ${({ disabled }) => (disabled ? '#b5b3b1' : '#444')};
`

const BigIcon = styled.span`
  display: flex;
  align-items: center;
  height: 39px;
`

const BigLine = styled.span`
  display: flex;
  align-items: center;
  gap: 5px;
  font-size: ${({ $small }) => ($small ? 12 : 13)}px;
  line-height: 17px;
  white-space: nowrap;
`

const LabelTool = styled.button`
  display: flex;
  align-items: center;
  gap: 4px;
  width: 72px;
  span {
    margin-right: ${({ $tight }) => ($tight ? 2 : 8)}px;
    line-height: 20px;
  }
`

const Collapse = styled.button`
  align-self: flex-end;
  margin: 0 4px 0 auto;
`

const FormulaBar = styled.div`
  display: flex;
  align-items: center;
  height: 53px;
  padding: 0 0 0 2px;
  input {
    flex: 1;
    min-width: 0;
    outline: 0;
    color: #666;
  }
`

const boxed = css`
  display: flex;
  align-items: center;
  height: 32px;
  background: #fdfdfd;
  border: 1px solid #cfcfcf;
`

const NameBox = styled.div`
  ${boxed}
  width: 111px;
  padding: 0 4px 0 6px;
  font-size: 15px;
`

const Dots = styled.span`
  display: flex;
  flex-direction: column;
  align-items: center;
  gap: 2px;
  width: 32px;
  i {
    width: 3px;
    height: 3px;
    background: #b5b5b5;
  }
`

const FormulaTools = styled.div`
  ${boxed}
  justify-content: space-between;
  width: 120px;
  padding: 0 14px 0 12px;
`

const Fx = styled.i`
  font-family: "Liberation Serif", serif;
  font-size: 18px;
  font-weight: bold;
  color: #666;
`

const FormulaInput = styled.div`
  ${boxed}
  flex: 1;
  margin-left: 2px;
  padding: 0 4px 2px 13px;
  font-size: 16px;
  font-weight: 350;
  font-feature-settings: normal;
`

const Workspace = styled.div`
  display: flex;
  flex: 1;
  min-height: 0;
`

const SheetArea = styled.main`
  position: relative;
  flex: 1;
  min-width: 0;
  overflow: hidden;
  border-right: 1px solid #ababab;
  border-bottom: 1px solid #ababab;
  font-feature-settings: normal;
`

/* runs a little past the area, so that the last row is cut off */
const Grid = styled.table`
  width: 100%;
  height: calc(100% + 3px);
  table-layout: fixed;
  border-collapse: separate;
  border-spacing: 0;
  .head {
    width: 29px;
  }
  .rest {
    width: 17px;
  }
`

const headCell = css`
  padding: 0;
  font-size: 16px;
  font-weight: 350;
  color: #222;
  background: #e6e6e6;
  line-height: 20px;
`

const Corner = styled.td`
  ${headCell}
  height: 26px;
  border-right: 1px solid #c0c0c0;
  border-bottom: 1px solid #9f9f9f;
  svg {
    margin: 4px 0 0 7px;
  }
`

const ColHead = styled.th`
  ${headCell}
  padding-bottom: 4px;
  border-right: 1px solid #c0c0c0;
  border-bottom: 1px solid #9f9f9f;
`

const GridRow = styled.tr`
  height: ${({ $tall }) => ($tall ? 39 : 26)}px;
`

const RowHead = styled.th`
  ${headCell}
  padding: 0 4px 4px 0;
  vertical-align: bottom;
  border-right: 1px solid #9f9f9f;
  border-bottom: 1px solid #c8c8c8;
`

const Cell = styled.td`
  padding: 0 0 3px 3px;
  overflow: visible;
  white-space: nowrap;
  font-size: ${({ $title }) => ($title ? 24 : 16)}px;
  font-weight: ${({ $title }) => ($title ? 'bold' : 300)};
  line-height: 22px;
  color: ${({ $title }) => ($title ? '#000' : '#222')};
  background: #fff;
  border-right: 1px solid #d6d6d6;
  border-bottom: 1px solid #d6d6d6;
`

const Connector = styled.svg`
  position: absolute;
  left: 370px;
  top: 171px;
`

const Frame = styled.div`
  position: absolute;
  left: ${({ $x }) => $x}px;
  top: ${({ $y }) => $y}px;
  width: ${({ $w }) => $w}px;
  height: ${({ $h }) => $h}px;
  border: 4px solid #ed7d31;
`

const Callout = styled.div`
  position: absolute;
  left: 658px;
  top: 212px;
  display: flex;
  align-items: center;
  width: 664px;
  height: 157px;
  padding: 0 0 10px 14px;
  font-size: 30px;
  font-weight: 300;
  line-height: 36px;
  white-space: nowrap;
  color: #fff;
  background: #ed7d31;
`

const VScroll = styled.div`
  display: flex;
  flex-direction: column;
  width: 16px;
  padding: 2px 0 0 2px;
`

const ScrollButton = styled.button`
  display: flex;
  align-items: center;
  justify-content: center;
  flex: none;
  width: ${({ $side }) => ($side ? '17px' : '100%')};
  height: 17px;
  background: #fff;
  border: 1px solid #ababab;
`

const VTrack = styled.div`
  flex: 1;
  background: #f0f0f0;
`

const VThumb = styled.div`
  height: 96%;
  background: #fff;
  border: 1px solid #ababab;
`

const SheetBar = styled.div`
  display: flex;
  align-items: center;
  height: 24px;
  padding-right: 16px;
  border-bottom: 1px solid #d0d0d0;
`

const SheetNav = styled.div`
  display: flex;
  gap: 14px;
  width: 84px;
  height: 18px;
  padding-left: 18px;
  border-right: 1px solid #a0a0a0;
`

const SheetTab = styled.button`
  align-self: flex-start;
  width: 77px;
  height: 21px;
  padding: 0 2px 2px 0;
  font-family: "Noto Sans", sans-serif;
  font-size: 16px;
  line-height: 18px;
  color: #555;
  ${({ $active }) => $active && css`
    color: #217346;
    background: #fff;
    border-bottom: 2px solid #217346;
    border-right: 1px solid #ababab;
  `}
`

const AddSheet = styled.button`
  margin: 0 auto 0 27px;
`

const HScroll = styled.div`
  display: flex;
  width: 608px;
`

const HTrack = styled.div`
  flex: 1;
  background: #f0f0f0;
`

const HThumb = styled.div`
  width: 95%;
  height: 17px;
  background: #fff;
  border: 1px solid #ababab;
`

const StatusBar = styled.footer`
  display: flex;
  align-items: center;
  height: 24px;
  padding: 0 4px 0 5px;
  background: #f3f2f1;
  > span + svg {
    margin: 0 17px 0 21px;
  }
`

const Access = styled.span`
  display: flex;
  align-items: center;
  gap: 2px;
  font-size: 12px;
`

const Views = styled.div`
  display: flex;
  margin-left: auto;
`

const ViewButton = styled.button`
  display: flex;
  align-items: center;
  justify-content: center;
  width: 44px;
  height: 24px;
  background: ${({ $active }) => ($active ? '#d0cecc' : 'none')};
`

const Step = styled.button`
  padding: 0 4px;
`

const Slider = styled.input`
  appearance: none;
  width: 110px;
  height: 14px;
  margin: 0;
  background: linear-gradient(#999, #999) center / 100% 1px no-repeat;
  &::-webkit-slider-thumb {
    appearance: none;
    width: 5px;
    height: 12px;
    background: #333;
  }
`

const ZoomText = styled.span`
  width: 46px;
  text-align: right;
  font-size: 14px;
`
